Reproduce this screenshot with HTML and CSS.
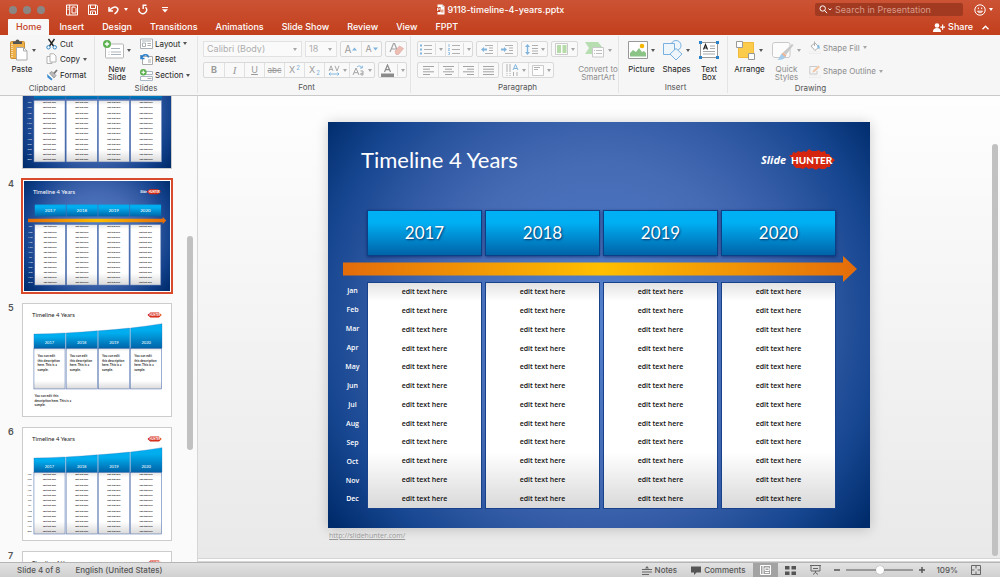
FILE: index.html
```html
<!DOCTYPE html>
<html lang="en">
<head>
<meta charset="utf-8">
<title>9118-timeline-4-years.pptx</title>
<link rel="stylesheet" href="styles.css">
</head>
<body>
<div class="app">
  <header class="head">
    <div class="titlebar">
      <div class="title-left">
        <div class="lights"><i></i><i></i><i></i></div>
        <div class="quick">
          <button aria-label="Template gallery"><svg width="12" height="12" viewBox="0 0 12 12" fill="none" stroke="#fff"><path d="M.5 1h11v10H.5zM3.7 1v10M1.500 3.300h1.200M1.500 5.300h1.200M6 3h2.500L10 4.500V9H6z"/></svg></button>
          <button aria-label="Save"><svg width="10" height="11" viewBox="0 0 10 11" fill="none" stroke="#fff"><path d="M.5 1h8l1 1v8.500h-9zM2.500 1v3.500h5V1M2.500 10.500V7h5v3.500M4.500 8v2"/></svg></button>
          <button class="undo" aria-label="Undo"><svg width="11" height="10" viewBox="0 0 11 10" fill="none" stroke="#fff" stroke-width="1.500"><path d="M1 2v4h4M1.500 5.500C4 2 8 1 9.600 3.500 10.800 5.500 8.500 7.500 6.500 9"/></svg><span class="arr light"></span></button>
          <button aria-label="Redo"><svg width="10" height="11" viewBox="0 0 10 11" fill="none" stroke="#fff" stroke-width="1.400"><path d="M1.500 4A3.800 3.800 0 1 0 7.500 3.200M4.500 1.200h4M5.200 1v4"/></svg></button>
          <button class="more" aria-label="Customize toolbar"><svg width="6" height="6" viewBox="0 0 6 6" fill="#fff"><path d="M0 0h6v1H0zM0 2.200h6L3 5.500z"/></svg></button>
        </div>
      </div>
      <h1 class="doc"><svg width="9" height="11" viewBox="0 0 9 11"><path d="M1.500.5h5l2 2v8h-7z" fill="#fff"/><path d="M6.500.5v2h2" fill="none" stroke="#bbb" stroke-width=".6"/><path d="M0 3h4.500v5H0z" fill="#c4401f"/><path d="M1.500 7V4h1.300a.8.800 0 0 1 0 1.700H1.500" fill="none" stroke="#fff" stroke-width=".8"/><path d="M5 5.500h2.500v3H5z" fill="#e8a58f"/></svg>9118-timeline-4-years.pptx</h1>
      <div class="title-right">
        <label class="search"><svg width="13" height="9" viewBox="0 0 13 9" fill="none" stroke="#fff"><circle cx="3.700" cy="3.500" r="2.700"/><path d="M5.700 5.500L8 8.200M9.500 3.500l1.400 1.500 1.400-1.500"/></svg><input type="text" placeholder="Search in Presentation" aria-label="Search in Presentation"></label>
        <button class="smile" aria-label="Feedback"><svg width="12" height="12" viewBox="0 0 12 12" fill="none" stroke="#fff"><circle cx="6" cy="6" r="5.200"/><path d="M3.500 7.200c1 2 4 2 5 0z"/><path d="M4.300 3.500v1.600M7.700 3.500v1.600"/></svg><span class="arr light"></span></button>
      </div>
    </div>
    <nav class="tabs">
      <button class="on">Home</button><button>Insert</button><button>Design</button><button>Transitions</button><button>Animations</button><button>Slide Show</button><button>Review</button><button>View</button><button>FPPT</button>
      <div class="share">
        <button><svg width="12" height="9" viewBox="0 0 12 9" fill="#fff"><circle cx="4" cy="2.500" r="2.300"/><path d="M0 9c0-3 1.500-4 4-4s4 1 4 4zM9 1.500h1.200v2H12v1.200h-1.800v2H9v-2H7.300V3.500H9z"/></svg>Share</button>
        <button aria-label="Collapse ribbon"><svg width="7" height="5" viewBox="0 0 7 5" fill="none" stroke="#fff" stroke-width="1.400"><path d="M.5 4.300l3-3 3 3"/></svg></button>
      </div>
    </nav>
  </header>

  <section class="ribbon">
    <div class="group g-clip">
      <div class="body">
        <button class="big"><span class="ic"><svg width="20" height="22" viewBox="0 0 20 22"><rect x="1.500" y="2.500" width="14" height="17" rx="1" fill="#efb04a" stroke="#c98f35"/><path d="M3 5v13" stroke="#fff" stroke-dasharray="1 1"/><path d="M4 5V2.500h2.500a2 2 0 0 1 4 0H13V5z" fill="#555"/><path d="M7.500 8.500h7l3.500 3.500v9H7.500z" fill="#fff" stroke="#aaa"/><path d="M14.500 8.500V12H18" fill="none" stroke="#aaa"/></svg><span class="arr"></span></span>Paste</button>
        <div class="stack">
          <button><svg width="12" height="12" viewBox="0 0 12 12" fill="none"><path d="M2.500 1l5 7M8.500 1l-5 7" stroke="#222" stroke-width="1.400"/><circle cx="2.500" cy="9.300" r="1.700" stroke="#2b88c9"/><circle cx="8.800" cy="9.300" r="1.700" stroke="#2b88c9"/></svg>Cut</button>
          <button><svg width="12" height="12" viewBox="0 0 12 12" fill="#fff" stroke="#aaa" stroke-width=".9"><path d="M1 3.500h3.500L6 5v5.500H1z"/><path d="M4 .8h3.800L10 3v6H4z"/></svg>Copy<span class="arr"></span></button>
          <button><svg width="12" height="12" viewBox="0 0 12 12"><path d="M1 5l5.500 5-1 1.500L1.500 8.500z" fill="#3b8bd0"/><path d="M3.500 4L6 2.500l4 4L8 9z" fill="#bbb" stroke="#888" stroke-width=".7"/><path d="M8 4.500L11 1" stroke="#777" stroke-width="1.800"/></svg>Format</button>
        </div>
      </div>
      <div class="cap">Clipboard</div>
    </div>
    <div class="group g-slides">
      <div class="body">
        <button class="big"><span class="ic"><svg width="21" height="22" viewBox="0 0 21 22"><rect x="2.500" y="5" width="18" height="14" rx="1" fill="#fff" stroke="#b5b5b5"/><path d="M8 9.500h9M5.500 13h1M8 13h10M5.500 15.500h1M8 15.500h10" stroke="#aab3bb"/><circle cx="4" cy="5" r="4" fill="#5bb04f"/><path d="M4 2.800v4.400M1.800 5h4.400" stroke="#fff" stroke-width="1.300"/></svg><span class="arr"></span></span>New<br>Slide</button>
        <div class="stack">
          <button><svg width="13" height="11" viewBox="0 0 13 11" fill="#fff" stroke="#aab0b6"><path d="M.5 1h12v9.500H.5z"/><path d="M2 3h9M7.500 5.500H11M7.500 7.500H11M2.500 5h3v3.500h-3z"/></svg>Layout<span class="arr"></span></button>
          <button><svg width="13" height="12" viewBox="0 0 13 12" fill="none"><path d="M2.500 3.500h10v8h-10z" fill="#fff" stroke="#aaa"/><path d="M8 7h3M8 9h3" stroke="#aaa"/><path d="M1 2v3.500h3.500M1.300 5C3 .8 8 .5 8.500 4.500" stroke="#2b7fc9" stroke-width="1.500"/></svg>Reset</button>
          <button><svg width="13" height="12" viewBox="0 0 13 12"><path d="M3.500 2.500h9v3h-9zM.5 7.500h12v4H.5z" fill="#fff" stroke="#a9b7c4"/><path d="M7.500 9.500h4" stroke="#aaa"/><circle cx="3.300" cy="3.300" r="3.300" fill="#5bb04f"/><path d="M3.300 1.500v3.600M1.500 3.300h3.600" stroke="#fff"/></svg>Section<span class="arr"></span></button>
        </div>
      </div>
      <div class="cap">Slides</div>
    </div>
    <div class="group g-font off">
      <div class="body rows">
        <div class="line">
          <span class="combo wide"><select aria-label="Font"><option>Calibri (Body)</option></select><span class="arr"></span></span>
          <span class="combo"><select aria-label="Font size"><option>18</option></select><span class="arr"></span></span>
          <span class="seg"><button class="ltr" aria-label="Grow font">A<svg width="5" height="4" viewBox="0 0 5 4"><path d="M0 3.500L2.500.5 5 3.500z" fill="#5a9fd4"/></svg></button><button class="ltr small" aria-label="Shrink font">A<svg width="5" height="4" viewBox="0 0 5 4"><path d="M0 .5h5L2.500 3.500z" fill="#5a9fd4"/></svg></button></span>
          <span class="seg"><button aria-label="Clear formatting"><svg width="15" height="14" viewBox="0 0 15 14"><path d="M1 10L4.500 1.500h1L9 10M2.300 7h5" fill="none" stroke="#888" stroke-width="1.200"/><path d="M6 9l4.500-5 4 2.500-5 6H7z" fill="#eba999" stroke="#c88" stroke-width=".6"/></svg></button></span>
        </div>
        <div class="line">
          <span class="seg"><button><b>B</b></button><button><i class="serif">I</i></button><button><u>U</u></button><button><s>abc</s></button><button aria-label="Superscript">X<sup>2</sup></button><button aria-label="Subscript">X<sub>2</sub></button><button class="w25" aria-label="Character spacing"><svg width="12" height="11" viewBox="0 0 12 11" fill="none"><path d="M1 6L3 .8 5 6M1.600 4.500h2.800M7 .8L9 6l2-5.200" stroke="#888" stroke-width=".9"/><path d="M1 9h10M2.500 7.500L1 9l1.500 1.500M9.500 7.500L11 9l-1.500 1.500" stroke="#5a9fd4"/></svg><span class="arr"></span></button><button class="w25" aria-label="Change case"><svg width="13" height="11" viewBox="0 0 13 11" fill="none"><path d="M1 10l3-7 3 7M2 7.700h4" stroke="#888"/><path d="M8.500 6h2.500v4H9q-1.500-2 2-2" stroke="#888"/><path d="M5 2c2-1.800 4-1 5 1M10.300.8V3H8" stroke="#5a9fd4"/></svg><span class="arr"></span></button></span>
          <span class="seg"><button class="w28" aria-label="Font color"><svg width="13" height="13" viewBox="0 0 13 13"><path d="M3.500 8l3-7 3 7M4.500 5.700h4" fill="none" stroke="#666" stroke-width="1.200"/><path d="M0 9.500h13V13H0z" fill="#666"/></svg><span class="bar"></span><span class="arr"></span></button></span>
        </div>
      </div>
      <div class="cap">Font</div>
    </div>
    <div class="group g-para off">
      <div class="body">
        <div class="rows">
          <div class="line">
            <span class="seg"><button class="w28" aria-label="Bullets"><svg width="12" height="11" viewBox="0 0 12 11"><path d="M0 .5h2v2H0zM0 4.500h2v2H0zM0 8.500h2v2H0z" fill="#5a9fd4"/><path d="M4 1.500h8M4 5.500h8M4 9.500h8" stroke="#999"/></svg><span class="bar"></span><span class="arr"></span></button><button class="w28" aria-label="Numbering"><svg width="12" height="11" viewBox="0 0 12 11"><path d="M1 0v3M.3 4.500h1.200L.3 6.500h1.400M.3 8.500h1.200v2H.3" stroke="#5a9fd4" stroke-width=".9" fill="none"/><path d="M4 1.500h8M4 5.500h8M4 9.500h8" stroke="#999"/></svg><span class="bar"></span><span class="arr"></span></button></span>
            <span class="seg"><button aria-label="Decrease indent"><svg width="13" height="9" viewBox="0 0 13 9"><path d="M0 4.500L3 2v1.500h3v2H3V7z" fill="#5a9fd4"/><path d="M4 .5h8M8 3h4M8 5.500h4M4 8.500h8" stroke="#999"/></svg></button><button aria-label="Increase indent"><svg width="13" height="9" viewBox="0 0 13 9"><path d="M6 4.500L3 2v1.500H0v2h3V7z" fill="#5a9fd4"/><path d="M4 .5h8M8 3h4M8 5.500h4M4 8.500h8" stroke="#999"/></svg></button></span>
            <span class="seg"><button class="w25" aria-label="Line spacing"><svg width="13" height="11" viewBox="0 0 13 11"><path d="M2.500 0L5 3H3.200v5H5l-2.500 3L0 8h1.800V3H0z" fill="#5a9fd4"/><path d="M7 1.500h6M7 4.500h6M7 7h6M7 9.500h6" stroke="#999"/></svg><span class="arr"></span></button></span>
            <span class="seg"><button class="w25" aria-label="Columns"><svg width="13" height="12" viewBox="0 0 13 12"><path d="M.5.5h12v11H.5z" fill="#fff" stroke="#bbb"/><path d="M2 2h4v8H2zM7.500 2h4v8h-4z" fill="#9fd28f"/></svg><span class="arr"></span></button></span>
          </div>
          <div class="line">
            <span class="seg"><button aria-label="Align left"><svg width="11" height="9" viewBox="0 0 11 9"><path d="M0 .5h11M0 3.200h7M0 5.800h11M0 8.500h7" stroke="#888"/></svg></button><button aria-label="Center"><svg width="11" height="9" viewBox="0 0 11 9"><path d="M0 .5h11M2 3.200h7M0 5.800h11M2 8.500h7" stroke="#888"/></svg></button><button aria-label="Align right"><svg width="11" height="9" viewBox="0 0 11 9"><path d="M0 .5h11M4 3.200h7M0 5.800h11M4 8.500h7" stroke="#888"/></svg></button><button aria-label="Justify"><svg width="11" height="9" viewBox="0 0 11 9"><path d="M0 .5h11M0 3.200h11M0 5.800h11M0 8.500h11" stroke="#888"/></svg></button></span>
            <span class="seg"><button class="w25" aria-label="Text direction"><svg width="13" height="12" viewBox="0 0 13 12" fill="none"><path d="M1 0v12M4 0v12M7.500 8v4M11 8v4" stroke="#999" stroke-dasharray="8 1 1 1"/><path d="M7 6l2.500-5.500L12 6M8 4.500h3" stroke="#5a9fd4"/></svg><span class="arr"></span></button><button class="w25" aria-label="Align text"><svg width="12" height="11" viewBox="0 0 12 11" fill="#fff" stroke="#999"><path d="M.5.500h11v10H.5z" stroke="#bbb"/><path d="M2 2.500h6M2 4.500h4"/></svg><span class="arr"></span></button></span>
          </div>
        </div>
        <button class="big smart"><span class="ic"><svg width="21" height="22" viewBox="0 0 21 22"><path d="M1 3h13l5 6-5 6H1l4-6z" fill="#a3d69a"/><path d="M8.500 8.500h11v9.500h-11z" fill="#fff" stroke="#bbb"/><path d="M10 11.500h1M12 11.500h6M10 14.500h1M12 14.500h6" stroke="#aaa"/></svg><span class="arr"></span></span>Convert to<br>SmartArt</button>
      </div>
      <div class="cap">Paragraph</div>
    </div>
    <div class="group g-insert">
      <div class="body">
        <button class="big"><span class="ic"><svg width="20" height="22" viewBox="0 0 20 22"><path d="M.5 2.500h19v17H.5z" fill="#fff" stroke="#999"/><path d="M2 17.500V14l3-3 3 2 3-4 3 4 2-1 2 2v3.500z" fill="#8cc487"/><circle cx="14" cy="7" r="2.300" fill="#f5b400"/></svg><span class="arr"></span></span>Picture</button>
        <button class="big"><span class="ic"><svg width="20" height="22" viewBox="0 0 20 22" fill="#eef6fc" stroke="#79b0de"><circle cx="13" cy="6.500" r="5"/><path d="M.5 4.500h11v11H.5z"/><path d="M13 9.500l6 5.500-6 6-6-6z"/></svg><span class="arr"></span></span>Shapes</button>
        <button class="big narrow"><span class="ic"><svg width="20" height="22" viewBox="0 0 20 22"><path d="M1.500 3.500h17v15h-17z" fill="#fff" stroke="#999"/><path d="M11 7h5M11 9.500h5M4 12.500h12M4 15h12" stroke="#aaa"/><path d="M4.500 10.500L6.500 5.500l2 5M5.200 9h2.600" stroke="#222" fill="none" stroke-width="1.200"/><path d="M0 2h3v3H0zM17 2h3v3h-3zM0 17h3v3H0zM17 17h3v3h-3z" fill="#2d82cc"/></svg></span>Text<br>Box</button>
      </div>
      <div class="cap">Insert</div>
    </div>
    <div class="group g-draw">
      <div class="body">
        <button class="big"><span class="ic"><svg width="20" height="22" viewBox="0 0 20 22"><path d="M2.500 3.500h15v15h-15z" fill="#fbcb4b" stroke="#f3b93a"/><path d="M.5 2.500h6v6h-6zM12.500 14.500h6v6h-6z" fill="#fff" stroke="#999"/></svg><span class="arr"></span></span>Arrange</button>
        <button class="big dim"><span class="ic"><svg width="22" height="22" viewBox="0 0 22 22"><path d="M3 3.500h13q2 0 2 2v11q0 2-2 2H2l-1.500-2v-11q0-2 2.500-2z" fill="#fff" stroke="#bbb"/><path d="M21.500 6L14 16l-3-2.500L20 5z" fill="#bbb"/><path d="M11 14l3 2.500c-1 4-5 4.500-9 4.500 3-1 2.500-6 6-7z" fill="#8dbfe6"/><path d="M11 13.500l3.500 3-1.200 1.500-3.600-3z" fill="#f0a070"/></svg><span class="arr"></span></span>Quick<br>Styles</button>
        <div class="stack two dim">
          <button><svg width="12" height="13" viewBox="0 0 12 13"><path d="M2 5l4-3 4 4-4 3.500z" fill="#fff" stroke="#999"/><path d="M5.500 5V.5" stroke="#999"/><path d="M9 3.500c2 1 2 3 1.300 5L8 6z" fill="#5aa6dd"/><path d="M0 11h12v1.500H0z" fill="#fff" stroke="#ddd" stroke-width=".5"/></svg>Shape Fill<span class="arr"></span></button>
          <button><svg width="12" height="13" viewBox="0 0 12 13"><path d="M8 1.500H.8V9H8V6" fill="none" stroke="#bbb"/><path d="M3.500 7.500L4 5.500 9.500.5 11 2 5.500 7z" fill="#f0b890"/><path d="M0 11h12v1.500H0z" fill="#fff" stroke="#ddd" stroke-width=".5"/></svg>Shape Outline<span class="arr"></span></button>
        </div>
      </div>
      <div class="cap">Drawing</div>
    </div>
  </section>

  <main class="work">
    <aside class="pane">
      <ol class="thumbs" id="thumbs"></ol>
      <div class="scroll pane-scroll"></div>
    </aside>
    <section class="canvas">
      <article class="slide">
        <div class="slide-head">
          <h2>Timeline 4 Years</h2>
          <svg class="logo" width="76" height="22" viewBox="0 0 76 22" role="img" aria-label="Slide Hunter"><path d="M29 6l3 0 1-3 3 1 2-2 3 1 3-1 2 1 3-3 3 2 4 0 3-1 2 2 4-1 1 3 3 0 2 3 4 3-4 4-1 3-3 0-2 2-4 0-2-1-3 2-4-2-3 1-3-2-3 2-3-1-4 0-2-2-2-3 0-4z" fill="#d4250f"/><text x="1" y="15" class="lg-a">Slide</text><text x="31" y="15" class="lg-b">HUNTER</text></svg>
        </div>
        <div class="years"><div>2017</div><div>2018</div><div>2019</div><div>2020</div></div>
        <svg class="arrow" height="26" viewBox="0 0 514 26" preserveAspectRatio="none" aria-hidden="true"><defs><linearGradient id="og"><stop offset="0" stop-color="#e36c0a"/><stop offset=".5" stop-color="#ffbf00"/><stop offset="1" stop-color="#e36c0a"/></linearGradient></defs><path d="M0 6.500h500V0l14 13-14 13v-6.500H0z" fill="url(#og)"/></svg>
        <div class="grid" id="grid"></div>
      </article>
      <a class="url" href="#">http://slidehunter.com/</a>
      <div class="scroll main-scroll"></div>
    </section>
  </main>

  <footer class="status">
    <span class="s-slide">Slide 4 of 8</span><span>English (United States)</span>
    <div class="tools">
      <button><svg width="10" height="9" viewBox="0 0 10 9"><path d="M5 0l2 2.500H3z" fill="#666"/><path d="M0 3.500h10M0 6h10M0 8.500h7" stroke="#666"/></svg>Notes</button>
      <button class="cm"><svg width="10" height="9" viewBox="0 0 10 9"><path d="M0 .5h10v6H5.500L3 9V6.500H0z" fill="#555"/></svg>Comments</button>
      <button class="view on" aria-label="Normal view"><svg width="11" height="10" viewBox="0 0 11 10" fill="none" stroke="#fff"><path d="M.5.5h10v9H.5zM3 .5v9M5 3h4v2.500H5zM5 7.500h4"/></svg></button>
      <button class="view" aria-label="Slide sorter"><svg width="11" height="9" viewBox="0 0 11 9" fill="#555"><path d="M0 0h4.500v3.500H0zM6.500 0H11v3.500H6.500zM0 5.500h4.500V9H0zM6.500 5.500H11V9H6.500z"/></svg></button>
      <button class="view" aria-label="Slide show"><svg width="11" height="10" viewBox="0 0 11 10" fill="none" stroke="#666"><path d="M0 .5h11M1 1v5h9V1M3 3.500h5M5.500 6v2M3 9.500L5.500 7.500 8 9.500"/></svg></button>
      <button class="pm" aria-label="Zoom out"><svg width="6" height="6" viewBox="0 0 6 6"><path d="M0 3h6" stroke="#555" stroke-width="1.500"/></svg></button>
      <input type="range" min="0" max="100" value="52" aria-label="Zoom">
      <button class="pm" aria-label="Zoom in"><svg width="6" height="6" viewBox="0 0 6 6"><path d="M0 3h6M3 0v6" stroke="#555" stroke-width="1.500"/></svg></button>
      <span class="pct">109%</span>
      <button class="fit" aria-label="Fit to window"><svg width="10" height="10" viewBox="0 0 10 10" fill="none" stroke="#666"><path d="M.5.5h9v9h-9zM5 1v2.500M5 9V6.500M1 5h2.500M9 5H6.500"/></svg></button>
    </div>
  </footer>
</div>
<script src="script.js"></script>
</body>
</html>
```

FILE: styles.css
```css
* { box-sizing: border-box; }
body { margin: 0; font: 9px/12px Inter, "Liberation Sans", sans-serif; color: #222; background: #fff; }
button { font: inherit; color: inherit; background: none; border: 0; padding: 0; display: flex; align-items: center; }
svg { flex: none; display: block; }
.app { height: 100vh; display: flex; flex-direction: column; }
.arr { width: 0; height: 0; border: 2px solid transparent; border-top: 3px solid #555; border-bottom: 0; flex: none; }
.arr.light { border-top-color: #fff; }

.head { background: linear-gradient(#cc5335, #c23f1c); color: #fff; }
.titlebar { height: 19px; display: grid; grid-template-columns: 1fr auto 1fr; align-items: center; }
.title-left, .quick, .lights, .title-right { display: flex; align-items: center; }
.lights { gap: 6px; padding-left: 9px; }
.lights i { width: 8px; height: 8px; border-radius: 50%; background: #8b8684; }
.quick { gap: 10px; padding-left: 21px; }
.more { margin-left: 4px; }
.undo { gap: 5px; }
.doc { margin: 0; font-size: 9px; line-height: 12px; font-weight: 500; display: flex; align-items: center; gap: 3px; }
.title-right { justify-content: flex-end; gap: 11px; padding-right: 7px; }
.search { width: 148px; height: 13px; background: #a23a22; border-radius: 2px; display: flex; align-items: center; gap: 3px; padding: 0 4px; }
.search input { flex: 1; min-width: 0; border: 0; background: none; padding: 0; font: inherit; color: #fff; outline: 0; }
.search input::placeholder { color: #d99a88; opacity: 1; }
.smile { gap: 3px; }
.tabs { display: flex; align-items: stretch; height: 16px; padding-left: 8px; font-weight: 500; }
.tabs > button { padding: 0 9px; }
.tabs > .on { background: #f8f8f8; color: #c5421f; border-radius: 1px 1px 0 0; padding: 0 8px; margin-right: 1px; }
.share { margin-left: auto; display: flex; gap: 9px; padding-right: 11px; }
.share button { gap: 3px; }

.ribbon { height: 61px; display: flex; background: #f6f6f6; border-bottom: 1px solid #c9c9c9; font-size: 8px; line-height: 8px; flex: none; }
.group { display: flex; flex-direction: column; border-right: 1px solid #e4e4e4; margin: 1px 0 2px; }
.group:last-child { border: 0; }
.body { display: flex; height: 47px; }
.cap { text-align: center; color: #555; line-height: 11px; }
.g-clip { width: 95px; }
.g-slides { width: 103px; }
.g-font { width: 213px; padding-left: 5px; }
.g-para { width: 208px; padding-left: 6px; }
.g-insert { width: 109px; padding-left: 5px; }
.g-draw { width: 162px; padding-left: 3px; }
.big { flex-direction: column; width: 44px; padding-top: 3px; white-space: nowrap; }
.g-insert .big { width: 35px; }
.g-draw .big { width: 37px; }
.g-insert .big.narrow { width: 30px; }
.ic { display: flex; align-items: center; gap: 3px; height: 22px; margin-bottom: 4px; }
.stack { display: flex; flex-direction: column; justify-content: space-around; height: 47px; padding-left: 2px; }
.stack button { gap: 2px; }
.stack .arr { margin-left: 1px; }
.g-slides .stack { padding-left: 1px; }
.stack.two { padding-left: 4px; }
.dim, .off .big { color: #8c8c8c; }
.dim .arr, .off .arr { opacity: .5; }
.dim svg, .off svg { opacity: .75; }
.rows { display: flex; flex-direction: column; gap: 5px; padding-top: 5px; color: #999; }
.line { display: flex; gap: 3px; }
.seg { display: flex; height: 16px; border: 1px solid #d9d9d9; border-radius: 2px; background: #f9f9f9; }
.seg button { width: 20px; justify-content: center; gap: 3px; font-size: 9px; }
.seg button + button { border-left: 1px solid #e0e0e0; }
.seg .w25 { width: 25px; }
.seg .w28 { width: 27px; }
.bar { width: 1px; height: 12px; background: #ddd; }
.seg .ltr { font-size: 10px; gap: 1px; }
.seg .ltr.small { font-size: 9px; }
.seg s { font-size: 8px; }
.serif { font-family: "Liberation Serif", serif; font-size: 11px; }
.seg sup, .seg sub { font-size: 6px; line-height: 6px; color: #7db3dc; margin-left: -2px; }
.seg sup { margin-bottom: 5px; }
.seg sub { margin-top: 5px; }
.combo { display: flex; align-items: center; width: 32px; height: 16px; border: 1px solid #e2e2e2; background: #fafafa; padding: 0 4px 0 3px; }
.combo.wide { width: 99px; }
.combo select { flex: 1; min-width: 0; appearance: none; border: 0; background: none; padding: 0; font: inherit; font-size: 9px; color: #adadad; }
.g-para .smart { width: 44px; }

.work { flex: 1; min-height: 0; display: flex; }
.pane { width: 198px; flex: none; overflow: hidden; position: relative; background: #fafafa; border-right: 1px solid #d6d6d6; }
.thumbs { list-style: none; margin: -41px 0 0; padding: 0; display: flex; flex-direction: column; gap: 10px; }
.thumbs li { display: flex; }
.thumbs b { width: 22px; padding-left: 8px; font-weight: 600; line-height: 10px; color: #555; }
.thumb { width: 150px; height: 114px; border: 1px solid #ccc; background: #fff; }
.thumb svg { width: 100%; height: 100%; font-family: Lato, sans-serif; }
.current .thumb { border-color: #fff; outline: 2px solid #d9492b; outline-offset: -1px; padding: 1px; }
.scroll { position: absolute; width: 6px; border-radius: 3px; background: #c1c1c1; }
.pane-scroll { right: 4px; top: 30%; height: 46%; }
.canvas { flex: 1; position: relative; background: linear-gradient(#fefefe, #e9e9e9); border-bottom: 4px double #d5d5d5; padding: 26px 130px 0; }
.main-scroll { right: 2px; top: 48px; bottom: 2px; }
.slide { height: 406px; background: radial-gradient(circle at 50% 48%, #5480cc 0, #456bb4 45%, #345ca6 62%, #16458f 82%, #002c6c 98%); box-shadow: 0 1px 12px rgba(0,0,0,.2); color: #fff; font-family: Lato, sans-serif; display: flex; flex-direction: column; }
.slide-head { display: flex; justify-content: space-between; align-items: center; padding: 24px 34px 0 33px; }
.slide h2 { margin: 0; font-size: 22px; line-height: 28px; font-weight: 400; }
.lg-a { font: italic 700 11px "Noto Sans", sans-serif; fill: #fff; }
.lg-b { font: 900 10px Lato, sans-serif; fill: #fff; }
.years, .grid { display: grid; grid-template-columns: repeat(4, 1fr); gap: 3px; padding: 0 34px 0 39px; }
.years { margin-top: 36px; }
.years div { height: 46px; border: 1px solid #0b3f86; background: linear-gradient(#00b0f4 25%, #0063a8); box-shadow: 0 1px 3px rgba(0,20,80,.6); font-size: 17px; line-height: 44px; text-align: center; text-shadow: 1px 1px 2px rgba(0,30,80,.8); }
.arrow { width: calc(100% - 28px); margin: 0 14px 0 15px; }
.grid { grid-template-columns: 23px repeat(4, 1fr); padding-left: 13px; font-family: "Open Sans", sans-serif; font-size: 7px; line-height: 18px; font-weight: 600; text-align: center; }
.grid ul { list-style: none; margin: 0; padding: 0; height: 227px; display: flex; flex-direction: column; justify-content: space-around; }
.grid .col { border: 1px solid #17418a; color: #111; background: linear-gradient(#e3e3e3, #fff 8%, #fff 75%, #d9d9d9); }
.url { display: inline-block; margin-left: 1px; font: 7px/16px "Open Sans", sans-serif; color: #999; }

.status { height: 15px; flex: none; display: flex; align-items: center; gap: 15px; padding-left: 17px; background: linear-gradient(#e2e2e2, #d0d0d0); border-top: 1px solid #b5b5b5; color: #555; font-size: 8px; font-weight: 500; }
.tools { margin-left: auto; display: flex; align-items: center; align-self: stretch; padding-right: 19px; }
.tools button { gap: 3px; }
.tools .cm { margin: 0 7px 0 14px; }
.tools .view { width: 25px; align-self: stretch; justify-content: center; }
.tools .view.on { background: #a3a3a3; }
.tools .pm { margin: 0 6px; }
.tools input { appearance: none; width: 67px; height: 9px; margin: 0; background: linear-gradient(#999, #999) center / 100% 2px no-repeat; }
.tools input::-webkit-slider-thumb { appearance: none; width: 8px; height: 8px; border-radius: 50%; background: #fff; box-shadow: 0 0 1px #777; }
.pct { margin: 0 13px 0 6px; }
```

FILE: script.js
```js
const months = ['Jan', 'Feb', 'Mar', 'Apr', 'May', 'Jun', 'Jul', 'Aug', 'Sep', 'Oct', 'Nov', 'Dec'];
const years = [2017, 2018, 2019, 2020];
const list = (items, cls) => `<ul class="${cls}">${items.map(t => `<li>${t}</li>`).join('')}</ul>`;
document.getElementById('grid').innerHTML =
  list(months, 'months') + years.map(() => list(months.map(() => 'edit text here'), 'col')).join('');

// Thumbnails are drawn in slide units: 542 x 410.
const X = i => 40 + i * 118;
const defs = `<defs>
<radialGradient id="bg" gradientUnits="userSpaceOnUse" cx="271" cy="195" r="340"><stop offset="0" stop-color="#5480cc"/><stop offset=".45" stop-color="#4469b2"/><stop offset=".62" stop-color="#3159a2"/><stop offset=".82" stop-color="#12408a"/><stop offset="1" stop-color="#002c6c"/></radialGradient>
<linearGradient id="yr" x2="0" y2="1"><stop offset=".25" stop-color="#00aeef"/><stop offset="1" stop-color="#0063a8"/></linearGradient>
<linearGradient id="cl" x2="0" y2="1"><stop offset="0" stop-color="#e3e3e3"/><stop offset=".08" stop-color="#fff"/><stop offset=".8" stop-color="#fff"/><stop offset="1" stop-color="#d9d9d9"/></linearGradient></defs>`;

function rows(ink, labels) {
  return months.map((m, r) => {
    const y = 173 + r * 19;
    return `<text x="24" y="${y}" font-size="9" text-anchor="middle" fill="${labels}">${m}</text>` +
      years.map((_, i) => `<text x="${X(i) + 57}" y="${y}" font-size="8" font-weight="900" text-anchor="middle" fill="${ink}">edit text here</text>`).join('');
  }).join('');
}
const columns = (y, h) => years.map((_, i) => `<rect x="${X(i)}" y="${y}" width="114" height="${h}" fill="url(#cl)" stroke="#4b6cab" stroke-width="2"/>`).join('');

function drawing(kind) {
  const dark = kind === 'plain' || kind === 'arrow';
  let s = dark ? '<rect width="542" height="410" fill="url(#bg)"/>' : '';
  s += `<text x="33" y="48" font-size="22" fill="${dark ? '#fff' : '#222'}">Timeline 4 Years</text>`;
  if (dark) s += '<text x="432" y="44" font-size="12" font-style="italic" font-weight="700" fill="#fff">Slide</text>';
  s += '<path d="M459 40l8-7h30l8 7-8 7h-30z" fill="#d4250f" stroke="#d4250f" stroke-width="4"/><text x="463" y="44" font-size="10" font-weight="900" fill="#fff">HUNTER</text>';
  if (dark) {
    const y = kind === 'plain' ? 113 : 88;
    s += columns(162, 226);
    s += years.map((v, i) => `<rect x="${X(i)}" y="${y}" width="115" height="44" fill="url(#yr)"/><text x="${X(i) + 57}" y="${y + 28}" font-size="17" text-anchor="middle" fill="#fff">${v}</text>`).join('');
    if (kind === 'arrow') s += '<path d="M15 141h500v-7l13 13-13 13v-6H15z" fill="url(#og)"/>';
    return s + rows('#222', '#fff');
  }
  const tops = [110, 106, 98, 88, 72];
  s += columns(162, kind === 'text' ? 149 : 226);
  s += years.map((v, i) => `<path d="M${X(i)} ${tops[i]}Q${X(i) + 60} ${(tops[i] + tops[i + 1]) / 2 + 1} ${X(i) + 115} ${tops[i + 1]}V162H${X(i)}z" fill="url(#yr)" stroke="#2b62a8"/><text x="${X(i) + 57}" y="146" font-size="15" text-anchor="middle" fill="#fff">${v}</text>`).join('');
  if (kind !== 'text') return s + rows('#222', '#222');
  const para = (x, y, lines) => lines.map((t, k) => `<text x="${x}" y="${y + k * 17}" font-size="12" font-weight="700" fill="#333">${t}</text>`).join('');
  s += years.map((_, i) => para(X(i) + 13, 194, ['You can edit', 'this description', 'here. This is a', 'sample.'])).join('');
  return s + para(42, 341, ['You can edit this', 'description here. This is a', 'sample.']);
}
document.getElementById('thumbs').innerHTML = ['plain', 'arrow', 'text', 'curve', 'curve'].map((kind, i) =>
  `<li class="${i === 1 ? 'current' : ''}"><b>${i + 3}</b><div class="thumb"><svg viewBox="0 0 542 410" preserveAspectRatio="none">${i ? '' : defs}${drawing(kind)}</svg></div></li>`).join('');
```
